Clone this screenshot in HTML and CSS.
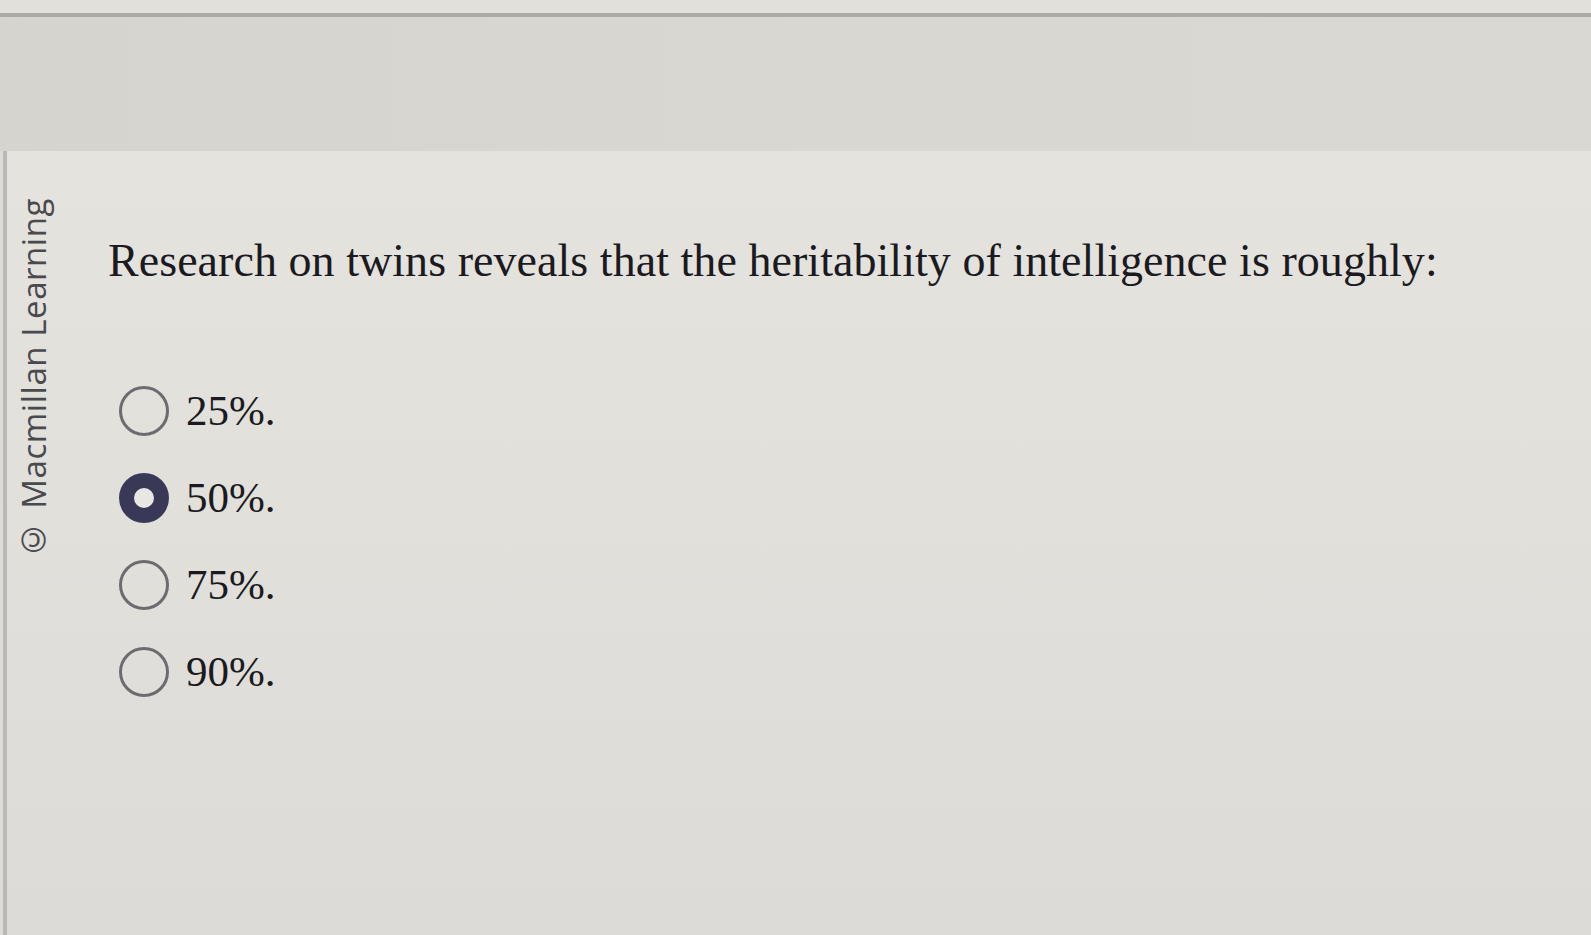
FILE: index.html
```html
<!DOCTYPE html>
<html lang="en">
<head>
<meta charset="utf-8">
<title>Question</title>
<link rel="stylesheet" href="styles.css">
</head>
<body>
<div class="top-strip"></div>
<div class="rule"></div>
<div class="band"></div>
<div class="main">
  <aside class="side">
    <div class="credit">© Macmillan Learning</div>
  </aside>
  <section class="content">
    <p class="question">Research on twins reveals that the heritability of intelligence is roughly:</p>
    <ul class="options">
      <li class="option"><span class="radio"></span><span class="label">25%.</span></li>
      <li class="option"><span class="radio checked"></span><span class="label">50%.</span></li>
      <li class="option"><span class="radio"></span><span class="label">75%.</span></li>
      <li class="option"><span class="radio"></span><span class="label">90%.</span></li>
    </ul>
  </section>
</div>
</body>
</html>
```

FILE: styles.css
```css
html, body {
  margin: 0;
  padding: 0;
}
body {
  width: 1591px;
  height: 935px;
  overflow: hidden;
  background: #dedcd7;
  font-family: "Liberation Serif", "Times New Roman", serif;
  color: #1b1a21;
}
.top-strip {
  height: 13px;
  background: #e2e0da;
}
.rule {
  height: 4px;
  background: #adaba6;
}
.band {
  height: 134px;
  background: linear-gradient(90deg, #d5d4cf 0%, #d9d7d2 50%, #d9d8d3 100%);
}
.main {
  display: flex;
  height: 784px;
  background: linear-gradient(180deg, #e4e3de 0%, #e1e0db 45%, #dcdbd7 100%);
  border-left: 4px solid #bab9b6;
  margin-left: 3px;
}
.side {
  width: 101px;
  flex: none;
}
.credit {
  writing-mode: vertical-rl;
  transform: rotate(180deg);
  font-family: "Open Sans", "Liberation Sans", sans-serif;
  font-size: 33px;
  line-height: 36px;
  color: #4a494e;
  margin-top: 47px;
  margin-left: 9px;
  letter-spacing: 0.55px;
}
.content {
  flex: 1;
}
.question {
  margin: 86px 0 0 0;
  font-size: 46px;
  line-height: 48px;
  letter-spacing: 0.05px;
}
.options {
  list-style: none;
  margin: 101px 0 0 0;
  padding: 0;
  display: flex;
  flex-direction: column;
  gap: 37px;
}
.option {
  display: flex;
  align-items: center;
  gap: 17px;
  height: 50px;
}
.radio {
  box-sizing: border-box;
  width: 50px;
  height: 50px;
  border-radius: 50%;
  border: 3.5px solid #6c6b70;
  margin-left: 11px;
  flex: none;
}
.radio.checked {
  border: 15.5px solid #3a3857;
  background: #e8e7e3;
}
.label {
  font-size: 43px;
  line-height: 50px;
  color: #1b1a21;
}
```
